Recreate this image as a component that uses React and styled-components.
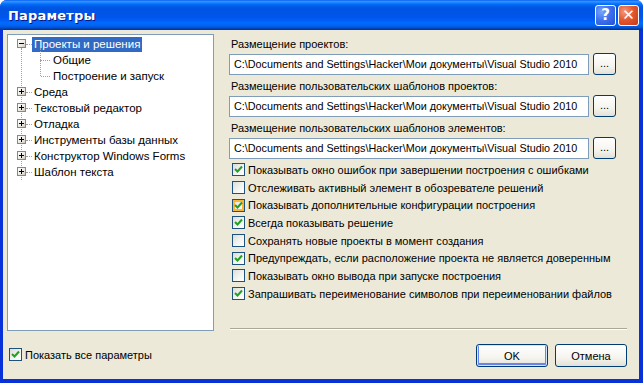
import React, { useState } from 'react';
import styled, { createGlobalStyle, css } from 'styled-components';

const GlobalStyle = createGlobalStyle`
  html, body {
    margin: 0;
    padding: 0;
    background: #ffffff;
  }
  body {
    font-family: "Liberation Sans", Arial, sans-serif;
    font-size: 11px;
    color: #000;
  }
`;

const Window = styled.div`
  width: 643px;
  height: 383px;
  box-sizing: border-box;
  display: flex;
  flex-direction: column;
  background: #0831d9;
  border-radius: 7px 7px 0 0;
  overflow: hidden;
`;

const TitleBar = styled.div`
  height: 30px;
  flex: none;
  display: flex;
  align-items: center;
  padding: 0 4px 0 8px;
  background: linear-gradient(to bottom,
    #0058ee 0%, #3593ff 4%, #288eff 7%, #127dff 10%, #036ffc 14%,
    #0262ee 18%, #0057e5 24%, #0054e3 30%, #0055eb 56%, #005bf5 66%,
    #026afe 76%, #0062ef 86%, #0052d6 92%, #0040ab 96%, #003092 100%);
`;

const Title = styled.div`
  flex: 1;
  color: #fff;
  font-family: "DejaVu Sans", sans-serif;
  font-weight: bold;
  font-size: 13px;
  letter-spacing: 0.2px;
  text-shadow: 1px 1px 0 #0a1883;
`;

const CaptionButton = styled.div`
  width: 21px;
  height: 21px;
  box-sizing: border-box;
  margin-left: 2px;
  border: 1px solid #fff;
  border-radius: 3px;
  display: flex;
  align-items: center;
  justify-content: center;
  color: #fff;
  font-family: "DejaVu Sans", sans-serif;
  font-weight: bold;
  font-size: 15px;
  background: ${p => p.close
    ? 'radial-gradient(circle at 30% 30%, #f39a7e 0%, #e3582f 45%, #c5381a 100%)'
    : 'radial-gradient(circle at 30% 30%, #7ba5fb 0%, #3f72ee 45%, #2450d2 100%)'};
`;

const Client = styled.div`
  flex: 1;
  margin: 0 4px 4px 3px;
  background: #ece9d8;
  display: flex;
  padding: 4px 12px 0 4px;
  gap: 15px;
`;

const LeftColumn = styled.div`
  width: 207px;
  flex: none;
  display: flex;
  flex-direction: column;
`;

const TreeBox = styled.div`
  height: 297px;
  box-sizing: border-box;
  background: #fff;
  border: 1px solid #7f9db9;
  padding: 1px 0 0 9px;
  position: relative;
`;

const TreeRow = styled.div`
  height: 16px;
  display: flex;
  align-items: center;
  position: relative;
  padding-left: ${p => (p.level ? 34 : 15)}px;
`;

const ExpandBox = styled.div`
  position: absolute;
  left: 0;
  top: 3px;
  width: 9px;
  height: 9px;
  box-sizing: border-box;
  border: 1px solid #7a8a99;
  background: linear-gradient(135deg, #fff 0%, #e6e4dc 70%, #c6c2b4 100%);
  z-index: 1;
  &::before {
    content: '';
    position: absolute;
    left: 1px;
    top: 3px;
    width: 5px;
    height: 1px;
    background: #000;
  }
  ${p => p.collapsed && css`
    &::after {
      content: '';
      position: absolute;
      left: 3px;
      top: 1px;
      width: 1px;
      height: 5px;
      background: #000;
    }
  `}
`;

const HLine = styled.div`
  position: absolute;
  left: ${p => p.left}px;
  top: 8px;
  width: ${p => p.width}px;
  border-top: 1px dotted #a0a0a0;
`;

const VLine = styled.div`
  position: absolute;
  left: ${p => p.left}px;
  top: ${p => p.top}px;
  height: ${p => p.height}px;
  border-left: 1px dotted #a0a0a0;
`;

const TreeLabel = styled.span`
  padding: 0 2px;
  font-size: 11.5px;
  line-height: 15px;
  white-space: nowrap;
  ${p => p.selected && css`
    background: #316ac5;
    color: #fff;
  `}
`;

const ShowAll = styled.div`
  margin-top: 15px;
  padding-left: 2px;
`;

const RightColumn = styled.div`
  flex: 1;
  min-width: 0;
  display: flex;
  flex-direction: column;
`;

const PathGroup = styled.div`
  display: flex;
  flex-direction: column;
  margin-top: 3px;
  margin-bottom: 1px;
`;

const PathLabel = styled.div`
  padding-left: 2px;
  height: 15px;
  line-height: 15px;
  margin-bottom: 1px;
`;

const PathRow = styled.div`
  display: flex;
  align-items: center;
  gap: 4px;
`;

const PathInput = styled.div`
  width: 360px;
  height: 21px;
  box-sizing: border-box;
  border: 1px solid #7f9db9;
  background: #fff;
  padding: 0 4px;
  line-height: 19px;
  font-size: 10.8px;
  white-space: nowrap;
  overflow: hidden;
`;

const xpButton = css`
  box-sizing: border-box;
  border: 1px solid #003c74;
  border-radius: 3px;
  background: linear-gradient(to bottom, #ffffff 0%, #f5f4ef 60%, #e3e1d6 100%);
  display: flex;
  align-items: center;
  justify-content: center;
`;

const BrowseButton = styled.div`
  ${xpButton};
  width: 23px;
  height: 22px;
  font-size: 11px;
  padding-bottom: 2px;
`;

const Options = styled.div`
  margin-top: 1px;
  padding-left: 3px;
  display: flex;
  flex-direction: column;
`;

const CheckRow = styled.label`
  height: 17.7px;
  display: flex;
  align-items: center;
  gap: 3px;
  white-space: nowrap;
`;

const Box = styled.span`
  width: 13px;
  height: 13px;
  flex: none;
  box-sizing: border-box;
  border: 1px solid #1c5180;
  background: linear-gradient(135deg, #dcdcd7 0%, #f3f3f0 55%, #ffffff 100%);
  display: flex;
  align-items: center;
  justify-content: center;
  ${p => p.hover && css`
    box-shadow: inset 0 0 0 2px #f8b636;
  `}
`;

const Separator = styled.div`
  margin-top: auto;
  margin-bottom: 14px;
  margin-left: 1px;
  height: 0;
  border-top: 1px solid #aca899;
  border-bottom: 1px solid #fff;
`;

const Footer = styled.div`
  display: flex;
  justify-content: flex-end;
  gap: 7px;
  margin-bottom: 12px;
`;

const DialogButton = styled.div`
  ${xpButton};
  width: 72px;
  height: 23px;
  ${p => p.isDefault && css`
    box-shadow: inset 0 0 0 1px #cee7ff, inset 0 -1px 0 2px #6982ee;
  `}
`;

function CheckMark() {
  return (
    <svg width="9" height="9" viewBox="0 0 9 9">
      <path d="M1 4 L3.5 6.5 L8 1.5" fill="none" stroke="#21a121" strokeWidth="2" />
    </svg>
  );
}

function CheckBox({ checked, hover, children }) {
  return (
    <CheckRow>
      <Box hover={hover}>{checked && <CheckMark />}</Box>
      <span>{children}</span>
    </CheckRow>
  );
}

const treeItems = [
  { label: 'Проекты и решения', level: 0, expanded: true, selected: true },
  { label: 'Общие', level: 1 },
  { label: 'Построение и запуск', level: 1 },
  { label: 'Среда', level: 0 },
  { label: 'Текстовый редактор', level: 0 },
  { label: 'Отладка', level: 0 },
  { label: 'Инструменты базы данных', level: 0 },
  { label: 'Конструктор Windows Forms', level: 0 },
  { label: 'Шаблон текста', level: 0 },
];

const paths = [
  'Размещение проектов:',
  'Размещение пользовательских шаблонов проектов:',
  'Размещение пользовательских шаблонов элементов:',
];

const options = [
  { text: 'Показывать окно ошибок при завершении построения с ошибками', checked: true },
  { text: 'Отслеживать активный элемент в обозревателе решений', checked: false },
  { text: 'Показывать дополнительные конфигурации построения', checked: true, hover: true },
  { text: 'Всегда показывать решение', checked: true },
  { text: 'Сохранять новые проекты в момент создания', checked: false },
  { text: 'Предупреждать, если расположение проекта не является доверенным', checked: true },
  { text: 'Показывать окно вывода при запуске построения', checked: false },
  { text: 'Запрашивать переименование символов при переименовании файлов', checked: true },
];

const docPath = 'C:\\Documents and Settings\\Hacker\\Мои документы\\Visual Studio 2010';

export default function App() {
  const [showAll] = useState(true);

  return (
    <>
      <GlobalStyle />
      <Window>
        <TitleBar>
          <Title>Параметры</Title>
          <CaptionButton>?</CaptionButton>
          <CaptionButton close>✕</CaptionButton>
        </TitleBar>
        <Client>
          <LeftColumn>
            <TreeBox>
              <VLine left={13} top={13} height={132} />
              {treeItems.map((item, i) => (
                <TreeRow key={i} level={item.level}>
                  {item.level === 0 ? (
                    <>
                      <ExpandBox collapsed={!item.expanded} />
                      <HLine left={9} width={6} />
                    </>
                  ) : (
                    <>
                      {i === 1 && <VLine left={23} top={-4} height={12} />}
                      {i === 2 && <VLine left={23} top={-8} height={16} />}
                      <HLine left={24} width={9} />
                    </>
                  )}
                  <TreeLabel selected={item.selected}>{item.label}</TreeLabel>
                </TreeRow>
              ))}
            </TreeBox>
            <ShowAll>
              <CheckBox checked={showAll}>Показать все параметры</CheckBox>
            </ShowAll>
          </LeftColumn>
          <RightColumn>
            {paths.map(label => (
              <PathGroup key={label}>
                <PathLabel>{label}</PathLabel>
                <PathRow>
                  <PathInput>{docPath}</PathInput>
                  <BrowseButton>...</BrowseButton>
                </PathRow>
              </PathGroup>
            ))}
            <Options>
              {options.map(o => (
                <CheckBox key={o.text} checked={o.checked} hover={o.hover}>{o.text}</CheckBox>
              ))}
            </Options>
            <Separator />
            <Footer>
              <DialogButton isDefault>OK</DialogButton>
              <DialogButton>Отмена</DialogButton>
            </Footer>
          </RightColumn>
        </Client>
      </Window>
    </>
  );
}
